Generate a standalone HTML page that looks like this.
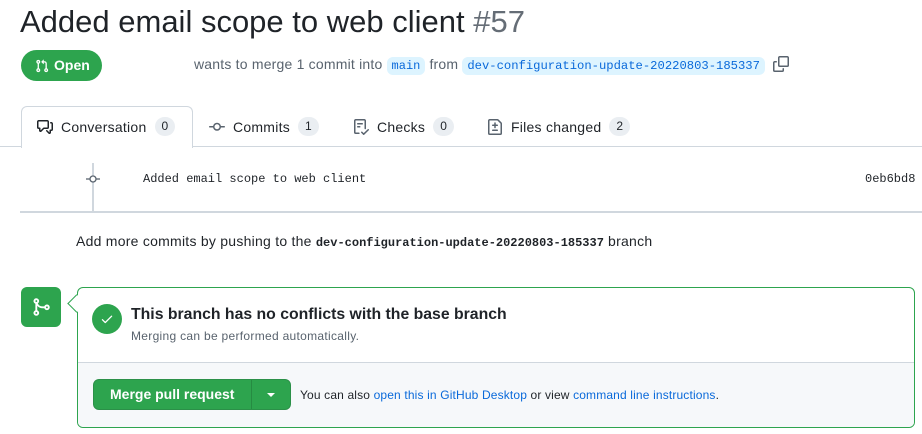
<!DOCTYPE html>
<html><head><style>
body{margin:0;width:922px;height:434px;overflow:hidden;background:#fff;font-family:"Liberation Sans",sans-serif;color:#1f2328;position:relative}
.a{position:absolute;white-space:nowrap}
.mono{font-family:"Liberation Mono",monospace;letter-spacing:0}
.cnt{display:inline-block;background:#eaeef2;border-radius:10px;font-size:12px;padding:0 7px;line-height:19px;margin-left:8px;color:#1f2328;letter-spacing:0}
.tab{font-size:14px;color:#1f2328;display:flex;align-items:center;letter-spacing:.25px}
.tab svg{margin-right:8px}
a{color:#0969da;text-decoration:none}
</style></head><body>
<div class="a" style="left:20px;top:2px;font-size:31px;line-height:40px;color:#1f2328">Added email scope to web client <span style="color:#656d76">#57</span></div>
<div class="a" style="left:21px;top:50px;width:81px;height:31px;background:#2da44e;border-radius:16px;color:#fff;font-weight:bold;font-size:14px;line-height:31px">
<svg style="position:absolute;left:14px;top:8px" width="14" height="16" viewBox="0 0 16 16" fill="#fff"><path d="M1.5 3.25a2.25 2.25 0 1 1 3 2.122v5.256a2.251 2.251 0 1 1-1.5 0V5.372A2.25 2.25 0 0 1 1.5 3.25Zm5.677-.177L9.573.677A.25.25 0 0 1 10 .854V2.5h1A2.5 2.5 0 0 1 13.5 5v5.628a2.251 2.251 0 1 1-1.5 0V5a1 1 0 0 0-1-1h-1v1.646a.25.25 0 0 1-.427.177L7.177 3.427a.25.25 0 0 1 0-.354ZM3.75 2.5a.75.75 0 1 0 0 1.5.75.75 0 0 0 0-1.5Zm0 9.5a.75.75 0 1 0 0 1.5.75.75 0 0 0 0-1.5Zm8.25.75a.75.75 0 1 0 1.5 0 .75.75 0 0 0-1.5 0Z"/></svg>
<span style="position:absolute;left:33px">Open</span></div>
<div class="a" style="left:194px;top:54px;font-size:14px;line-height:20px;color:#59636e;letter-spacing:.2px">wants to merge 1 commit into <span class="mono" style="background:#ddf4ff;color:#0969da;font-size:12px;padding:2px 5px;border-radius:6px">main</span> from <span class="mono" style="background:#ddf4ff;color:#0969da;font-size:12.2px;padding:2px 5px;border-radius:6px">dev-configuration-update-20220803-185337</span>
<svg style="vertical-align:-3px;margin-left:4px" width="16" height="16" viewBox="0 0 16 16" fill="#59636e"><path d="M0 6.75C0 5.784.784 5 1.750 5h1.5a.75.75 0 0 1 0 1.5h-1.5a.25.25 0 0 0-.25.25v7.5c0 .138.112.25.25.25h7.5a.25.25 0 0 0 .25-.25v-1.5a.75.75 0 0 1 1.5 0v1.5A1.75 1.75 0 0 1 9.25 16h-7.5A1.75 1.75 0 0 1 0 14.25Z"/><path d="M5 1.75C5 .784 5.784 0 6.75 0h7.5C15.216 0 16 .784 16 1.75v7.5A1.75 1.75 0 0 1 14.25 11h-7.5A1.75 1.75 0 0 1 5 9.25Zm1.75-.25a.25.25 0 0 0-.25.25v7.5c0 .138.112.25.25.25h7.5a.25.25 0 0 0 .25-.25v-7.5a.25.25 0 0 0-.25-.25Z"/></svg></div>
<!-- tabs -->
<div class="a" style="left:0;top:146px;width:922px;height:1px;background:#d0d7de"></div>
<div class="a" style="left:21px;top:106px;width:170px;border:1px solid #d0d7de;border-bottom:none;border-radius:6px 6px 0 0;background:#fff;height:41px"></div>
<div class="a tab" style="left:37px;top:117px"><svg width="16" height="16" viewBox="0 0 16 16" fill="#1f2328"><path d="M1.75 1h8.5c.966 0 1.75.784 1.75 1.75v5.5A1.75 1.75 0 0 1 10.250 10H7.061l-2.574 2.573A1.458 1.458 0 0 1 2 11.543V10h-.25A1.75 1.75 0 0 1 0 8.25v-5.5C0 1.784.784 1 1.75 1ZM1.5 2.75v5.5c0 .138.112.25.25.25h1a.75.75 0 0 1 .75.75v2.19l2.72-2.72a.749.749 0 0 1 .53-.22h3.5a.25.25 0 0 0 .25-.25v-5.5a.25.25 0 0 0-.25-.25h-8.5a.25.25 0 0 0-.25.25Zm13 2a.25.25 0 0 0-.25-.25h-.5a.75.75 0 0 1 0-1.5h.5c.966 0 1.75.784 1.75 1.75v5.5A1.75 1.75 0 0 1 14.25 12H14v1.543a1.458 1.458 0 0 1-2.487 1.030L9.220 12.280a.749.749 0 0 1 .326-1.275.749.749 0 0 1 .734.215l2.22 2.22v-2.19a.75.75 0 0 1 .75-.75h1a.25.25 0 0 0 .25-.25Z"/></svg>Conversation<span class="cnt">0</span></div>
<div class="a tab" style="left:209px;top:117px"><svg width="16" height="16" viewBox="0 0 16 16" fill="#59636e"><path d="M11.93 8.5a4.002 4.002 0 0 1-7.86 0H.75a.75.75 0 0 1 0-1.5h3.32a4.002 4.002 0 0 1 7.86 0h3.32a.75.75 0 0 1 0 1.5Zm-1.43-.75a2.5 2.5 0 1 0-5 0 2.5 2.5 0 0 0 5 0Z"/></svg>Commits<span class="cnt">1</span></div>
<div class="a tab" style="left:353px;top:117px"><svg width="16" height="16" viewBox="0 0 16 16" fill="#59636e"><path d="M2.5 1.75v11.5c0 .138.112.25.25.25h3.17a.75.75 0 0 1 0 1.5H2.75A1.75 1.75 0 0 1 1 13.25V1.75C1 .784 1.784 0 2.75 0h8.5C12.216 0 13 .784 13 1.75v7.736a.75.75 0 0 1-1.5 0V1.75a.25.25 0 0 0-.25-.25h-8.5a.25.25 0 0 0-.25.25Zm13.274 9.537v-.001l-4.557 4.45a.75.75 0 0 1-1.055-.008l-1.943-1.95a.75.75 0 0 1 1.062-1.058l1.419 1.425 4.026-3.932a.75.75 0 1 1 1.048 1.074ZM4.75 4h4.5a.75.75 0 0 1 0 1.5h-4.5a.75.75 0 0 1 0-1.5ZM4 7.75A.75.75 0 0 1 4.75 7h2a.75.75 0 0 1 0 1.5h-2A.75.75 0 0 1 4 7.75Z"/></svg>Checks<span class="cnt">0</span></div>
<div class="a tab" style="left:487px;top:117px"><svg width="16" height="16" viewBox="0 0 16 16" fill="#59636e"><path d="M1 1.75C1 .784 1.784 0 2.75 0h7.586c.464 0 .909.184 1.237.513l2.914 2.914c.329.328.513.773.513 1.237v9.586A1.75 1.75 0 0 1 13.25 16H2.75A1.75 1.75 0 0 1 1 14.25Zm1.75-.25a.25.25 0 0 0-.25.25v12.5c0 .138.112.25.25.25h10.5a.25.25 0 0 0 .25-.25V4.664a.25.25 0 0 0-.073-.177l-2.914-2.914a.25.25 0 0 0-.177-.073ZM8 3.25a.75.75 0 0 1 .75.75v1.5h1.5a.75.75 0 0 1 0 1.5h-1.5v1.5a.75.75 0 0 1-1.5 0V7h-1.5a.75.75 0 0 1 0-1.5h1.5V4A.75.75 0 0 1 8 3.25Zm-3 8a.75.75 0 0 1 .75-.75h4.5a.75.75 0 0 1 0 1.5h-4.5a.75.75 0 0 1-.75-.75Z"/></svg>Files changed<span class="cnt">2</span></div>
<!-- commit -->
<div class="a" style="left:92px;top:163px;width:2px;height:48px;background:#d0d7de"></div>
<svg class="a" style="left:85px;top:172px" width="16" height="14" viewBox="0 0 16 14"><rect x="0" y="6" width="16" height="3" fill="#fff"/><line x1="1" y1="7" x2="5" y2="7" stroke="#59636e" stroke-width="1.3"/><line x1="11" y1="7" x2="15" y2="7" stroke="#59636e" stroke-width="1.3"/><circle cx="8" cy="7" r="3" fill="#fff" stroke="#59636e" stroke-width="1.3"/></svg>
<div class="a mono" style="left:143px;top:171px;font-size:12px;line-height:16px;color:#1f2328">Added email scope to web client</div>
<div class="a mono" style="left:865px;top:171px;font-size:12px;line-height:16px;color:#1f2328">0eb6bd8</div>
<div class="a" style="left:20px;top:211px;width:902px;height:2px;background:#d0d7de"></div>
<div class="a" style="left:76px;top:231px;font-size:14px;line-height:20px;color:#1f2328;letter-spacing:.25px">Add more commits by pushing to the <b class="mono" style="font-size:12px">dev-configuration-update-20220803-185337</b> branch</div>
<!-- merge -->
<div class="a" style="left:21px;top:287px;width:40px;height:40px;background:#2da44e;border-radius:6px"><svg style="position:absolute;left:10px;top:10px" width="20" height="20" viewBox="0 0 16 16" fill="#fff"><path d="M5.45 5.154A4.25 4.25 0 0 0 9.25 7.5h1.378a2.251 2.251 0 1 1 0 1.5H9.25A5.734 5.734 0 0 1 5 7.123v3.505a2.25 2.25 0 1 1-1.5 0V5.372a2.25 2.25 0 1 1 1.95-.218ZM4.25 13.5a.75.75 0 1 0 0-1.5.75.75 0 0 0 0 1.5Zm8.5-4.5a.75.75 0 1 0 0-1.5.75.75 0 0 0 0 1.5ZM5 3.25a.75.75 0 1 0 0 .005V3.25Z"/></svg></div>
<div class="a" style="left:77px;top:287px;width:836px;height:139px;border:1px solid #2da44e;border-radius:6px;overflow:hidden">
<div style="position:absolute;left:0;top:74px;width:100%;height:1px;background:#d0d7de"></div>
<div style="position:absolute;left:0;top:75px;width:100%;height:70px;background:#f6f8fa"></div>
</div>
<div class="a" style="left:70px;top:297px;width:12px;height:12px;background:#fff;border-left:1px solid #2da44e;border-bottom:1px solid #2da44e;transform:rotate(45deg)"></div>
<div class="a" style="left:92px;top:304px;width:30px;height:30px;border-radius:50%;background:#2da44e"><svg style="position:absolute;left:8px;top:8px" width="14" height="14" viewBox="0 0 16 16" fill="#fff"><path d="M13.78 4.22a.75.75 0 0 1 0 1.06l-7.25 7.25a.75.75 0 0 1-1.06 0L2.22 9.28a.751.751 0 0 1 1.06-1.06L6 10.94l6.72-6.72a.75.75 0 0 1 1.06 0Z"/></svg></div>
<div class="a" style="left:131px;top:305px;font-size:15.8px;font-weight:bold;line-height:20px">This branch has no conflicts with the base branch</div>
<div class="a" style="left:131px;top:328px;font-size:12px;line-height:16px;color:#59636e;letter-spacing:.3px">Merging can be performed automatically.</div>
<div class="a" style="left:93px;top:379px;width:198px;height:31px;background:#2da44e;border-radius:6px;border:1px solid rgba(31,35,40,.15);box-sizing:border-box">
<div style="position:absolute;left:16px;top:0;line-height:29px;color:#fff;font-weight:bold;font-size:14px">Merge pull request</div>
<div style="position:absolute;left:157px;top:0;width:1px;height:29px;background:rgba(0,0,0,.15)"></div>
<div style="position:absolute;left:173px;top:13px;border-left:4px solid transparent;border-right:4px solid transparent;border-top:4px solid #fff"></div>
</div>
<div class="a" style="left:300px;top:387px;font-size:12px;line-height:16px;color:#1f2328;letter-spacing:.15px">You can also <a>open this in GitHub Desktop</a> or view <a>command line instructions</a>.</div>
</body></html>
